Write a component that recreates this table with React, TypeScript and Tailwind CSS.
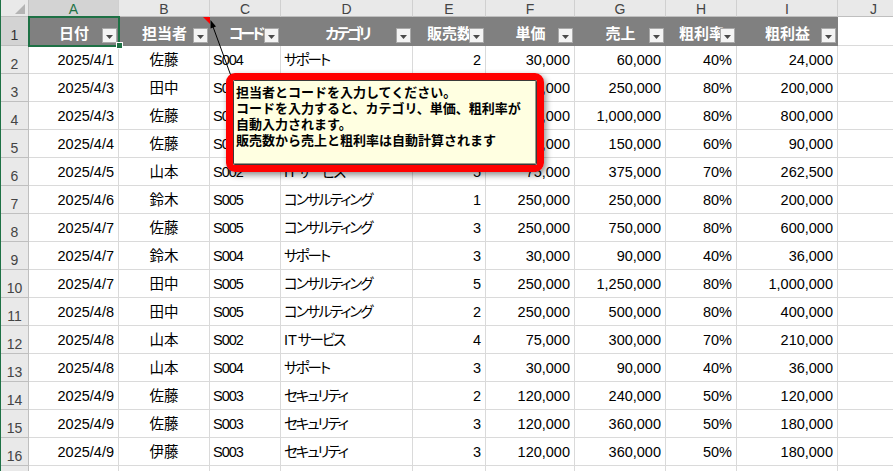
import React from "react";

type Row = string[];

const letters = ["A", "B", "C", "D", "E", "F", "G", "H", "I", "J"];
const headers = [
  { t: "日付", k: "" },
  { t: "担当者", k: "" },
  { t: "コード", k: "tracking-[-3px]" },
  { t: "カテゴリ", k: "tracking-[-3px]" },
  { t: "販売数", k: "" },
  { t: "単価", k: "" },
  { t: "売上", k: "" },
  { t: "粗利率", k: "" },
  { t: "粗利益", k: "" },
];

// how each data column lines up inside its cell
const align = [
  "justify-end pr-[4px]",
  "justify-center",
  "justify-start pl-[3px] tracking-[-1px]",
  "justify-start pl-[3px] tracking-[-2px]",
  "justify-end pr-[4px]",
  "justify-end pr-[4px]",
  "justify-end pr-[4px]",
  "justify-end pr-[4px]",
  "justify-end pr-[4px]",
];

const rows: Row[] = [
  ["2025/4/1", "佐藤", "S004", "サポート", "2", "30,000", "60,000", "40%", "24,000"],
  ["2025/4/3", "田中", "S005", "コンサルティング", "1", "250,000", "250,000", "80%", "200,000"],
  ["2025/4/3", "佐藤", "S005", "コンサルティング", "4", "250,000", "1,000,000", "80%", "800,000"],
  ["2025/4/4", "佐藤", "S001", "ハードウェア", "3", "50,000", "150,000", "60%", "90,000"],
  ["2025/4/5", "山本", "S002", "ITサービス", "5", "75,000", "375,000", "70%", "262,500"],
  ["2025/4/6", "鈴木", "S005", "コンサルティング", "1", "250,000", "250,000", "80%", "200,000"],
  ["2025/4/7", "佐藤", "S005", "コンサルティング", "3", "250,000", "750,000", "80%", "600,000"],
  ["2025/4/7", "鈴木", "S004", "サポート", "3", "30,000", "90,000", "40%", "36,000"],
  ["2025/4/7", "田中", "S005", "コンサルティング", "5", "250,000", "1,250,000", "80%", "1,000,000"],
  ["2025/4/8", "田中", "S005", "コンサルティング", "2", "250,000", "500,000", "80%", "400,000"],
  ["2025/4/8", "山本", "S002", "ITサービス", "4", "75,000", "300,000", "70%", "210,000"],
  ["2025/4/8", "山本", "S004", "サポート", "3", "30,000", "90,000", "40%", "36,000"],
  ["2025/4/9", "佐藤", "S003", "セキュリティ", "2", "120,000", "240,000", "50%", "120,000"],
  ["2025/4/9", "佐藤", "S003", "セキュリティ", "3", "120,000", "360,000", "50%", "180,000"],
  ["2025/4/9", "伊藤", "S003", "セキュリティ", "3", "120,000", "360,000", "50%", "180,000"],
];

// category text: keep latin letters at normal spacing, squeeze only the kana
const Category = ({ text }: { text: string }) => {
  const m = text.match(/^([A-Za-z]+)(.*)$/);
  if (!m) return <>{text}</>;
  return (
    <>
      <span className="tracking-normal mr-[1px]">{m[1]}</span>
      {m[2]}
    </>
  );
};

const FilterButton = () => (
  <div className="absolute right-[2px] bottom-[3px] w-[15px] h-[15px] bg-[#f4f4f4] border border-[#a9a9a9] flex items-center justify-center">
    <svg width="7" height="4" viewBox="0 0 7 4" className="mt-[3px]">
      <polygon points="0,0 7,0 3.5,4" fill="#4a4a4a" />
    </svg>
  </div>
);

const App = () => {
  return (
    <div className="relative w-[893px] h-[471px] overflow-hidden bg-white border-l border-[#1e7145] font-['Liberation_Sans','Noto_Sans_CJK_JP',sans-serif] [font-feature-settings:'palt']">
      <div className="grid grid-cols-[28px_90px_91px_71px_132px_73px_89px_91px_71px_101px_72px] w-max">
        {/* column letters */}
        <div className="h-[17px] bg-[#e9e9e9] border-r border-b border-[#bfbfbf] relative">
          <svg width="10" height="10" viewBox="0 0 10 10" className="absolute right-[3px] bottom-[2px]">
            <polygon points="10,0 10,10 0,10" fill="#b4b4b4" />
          </svg>
        </div>
        {letters.map((l, i) => (
          <div
            key={l}
            className={`h-[17px] flex justify-center items-start pt-[2px] text-[14px] leading-[14px] border-r border-[#d0d0d0] border-b border-b-[#bfbfbf] ${
              i === 0 ? "bg-[#d3d3d3] text-[#1e7145]" : "bg-[#e9e9e9] text-[#444]"
            }`}
          >
            {l}
          </div>
        ))}

        {/* row 1 : table header */}
        <div className="h-[29px] bg-[#d3d3d3] border-r border-b border-[#bfbfbf] flex items-end justify-center pb-[2px] text-[14px] leading-[16px] text-[#333]">
          1
        </div>
        {headers.map((h) => (
          <div
            key={h.t}
            className="relative h-[29px] bg-[#808080] flex items-center justify-center pt-[3px] text-white font-bold text-[15px] leading-[20px] font-['Noto_Sans_CJK_JP',sans-serif]"
          >
            <span className={`whitespace-nowrap ${h.k}`}>{h.t}</span>
            <FilterButton />
          </div>
        ))}
        <div className="h-[29px] border-r border-b border-[#dadada]" />

        {/* data rows */}
        {rows.map((r, ri) => (
          <React.Fragment key={ri}>
            <div className="h-[28px] bg-[#e9e9e9] border-r border-b border-[#bfbfbf] flex items-end justify-center pb-[1px] text-[14px] leading-[16px] text-[#444]">
              {ri + 2}
            </div>
            {r.map((c, ci) => (
              <div
                key={ci}
                className={`h-[28px] border-r border-b border-[#dadada] flex items-end pb-[3px] text-[14.5px] leading-[20px] text-black whitespace-nowrap overflow-hidden ${align[ci]}`}
              >
                {ci === 3 ? <Category text={c} /> : c}
              </div>
            ))}
            <div className="h-[28px] border-r border-b border-[#dadada]" />
          </React.Fragment>
        ))}
        {/* row 17, only its top edge shows */}
        <div className="h-[28px] bg-[#e9e9e9] border-r border-[#bfbfbf]" />
        {letters.map((l) => (
          <div key={l} className="h-[28px] border-r border-[#dadada]" />
        ))}
      </div>

      {/* selected cell A1 */}
      <div className="absolute left-[27px] top-[16px] w-[92px] h-[31px] border-2 border-[#1e7145]" />
      <div className="absolute left-[115px] top-[42px] w-[7px] h-[7px] bg-[#1e7145] border border-white" />

      {/* comment marker + leader line */}
      <svg className="absolute left-0 top-0 pointer-events-none" width="893" height="471">
        <polygon points="202,17 209,17 209,24" fill="#ff0000" />
        <line x1="211" y1="24" x2="230" y2="76" stroke="#000" strokeWidth="1" />
        <polygon points="209.5,20 215,26.4 209.6,28.4" fill="#000" />
      </svg>

      {/* comment box */}
      <div className="absolute left-[225px] top-[73px] w-[318px] h-[99px] rounded-[9px] border-[7px] border-[#ff0000] shadow-[2px_3px_6px_rgba(0,0,0,0.45)] overflow-hidden">
        <div className="w-full h-full bg-[#ffffe1] border border-[#3a3a3a] shadow-[inset_-1px_-1px_0_#9a9a8a] px-[2px] pt-[3px] font-['Noto_Sans_CJK_JP',sans-serif] [font-feature-settings:normal] text-[13px] leading-[16px] font-bold text-black whitespace-nowrap">
          <p>担当者とコードを入力してください。</p>
          <p>コードを入力すると、カテゴリ、単価、粗利率が</p>
          <p>自動入力されます。</p>
          <p>販売数から売上と粗利率は自動計算されます</p>
        </div>
      </div>
    </div>
  );
};

export default App;
